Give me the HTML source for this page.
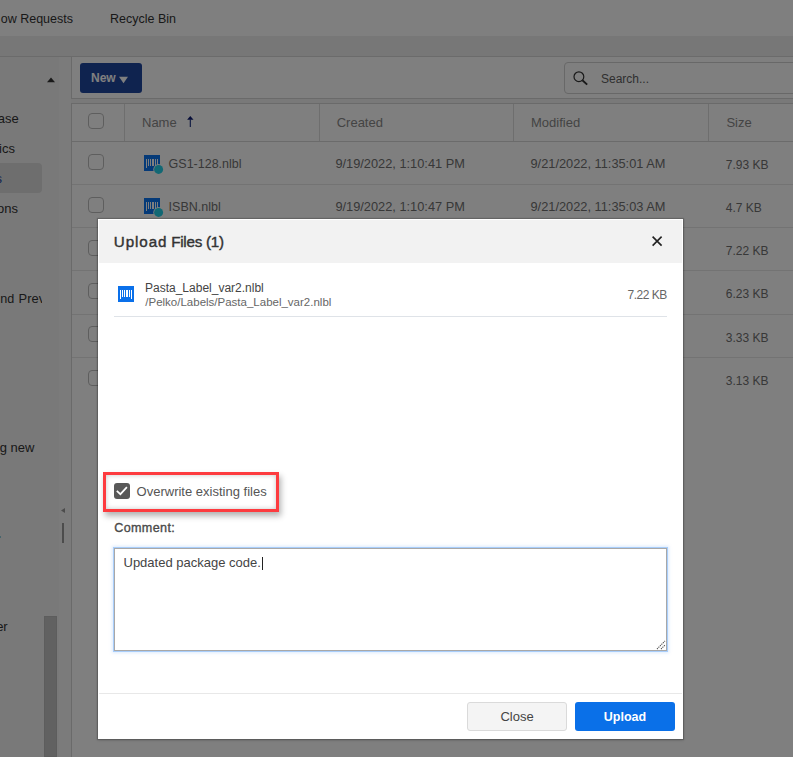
<!DOCTYPE html>
<html><head><meta charset="utf-8">
<style>
*{box-sizing:border-box;margin:0;padding:0}
html,body{width:793px;height:757px;overflow:hidden;background:#fff;font-family:"Liberation Sans",sans-serif;color:#333;position:relative}
.a{position:absolute}
.t{position:absolute;white-space:nowrap;line-height:1}
svg{display:block}
</style></head><body>
<div class="a" style="left:0px;top:0px;width:793px;height:36px;background:#fff;"></div>
<div class="t" style="top:12.62px;font-size:12.5px;color:#333;right:720px;">ow Requests</div>
<div class="t" style="top:12.62px;font-size:12.5px;color:#333;left:110px;">Recycle Bin</div>
<div class="a" style="left:0px;top:36px;width:793px;height:20px;background:#eeeeee;"></div>
<div class="a" style="left:0px;top:56px;width:793px;height:1px;background:#d6d6d6;"></div>
<div class="a" style="left:0px;top:57px;width:793px;height:700px;background:#f3f3f3;"></div>
<div class="a" style="left:59px;top:57px;width:12px;height:700px;background:#f6f6f6;"></div>
<div class="a" style="left:71px;top:57px;width:722px;height:42px;background:#fff;border-left:1px solid #d4d4d4;border-bottom:1px solid #d4d4d4"></div>
<div class="a" style="left:80px;top:63px;width:62px;height:30px;background:#1f479f;border-radius:3px"></div>
<div class="t" style="top:71.94px;font-size:12px;color:#fff;font-weight:bold;left:91px;">New</div>
<svg class="a" style="left:119px;top:75.5px" width="9" height="8" viewBox="0 0 9 8"><path d="M0 0.8H9L4.5 7.2Z" fill="#fff"/></svg>
<div class="a" style="left:564px;top:62px;width:240px;height:32px;background:#fff;border:1px solid #d0d0d0;border-radius:4px"></div>
<svg class="a" style="left:572px;top:69px" width="18" height="18" viewBox="0 0 18 18"><circle cx="6.9" cy="7.7" r="4.9" fill="none" stroke="#333" stroke-width="1.2"/><path d="M10.4 11.3L15.2 15.6" stroke="#333" stroke-width="1.9"/></svg>
<div class="t" style="top:73.24px;font-size:12px;color:#606060;left:601px;">Search...</div>
<svg class="a" style="left:46.5px;top:77px" width="8" height="6" viewBox="0 0 8 6"><path d="M0 5.2H8L4 0.6Z" fill="#333"/></svg>
<div class="t" style="top:111.90px;font-size:13px;color:#333;right:774.3px;">ase</div>
<div class="t" style="top:141.90px;font-size:13px;color:#333;right:778px;">ics</div>
<div class="a" style="left:-4px;top:163px;width:46px;height:30px;background:#dcdcdc;border-radius:4px"></div>
<div class="t" style="top:171.50px;font-size:13px;color:#1f479f;right:791px;">s</div>
<div class="t" style="top:201.50px;font-size:13px;color:#333;right:775px;">ons</div>
<div class="t" style="top:293.03px;font-size:12.6px;color:#333;left:0.2px;">nd</div>
<div class="a" style="left:0;top:280px;width:42px;height:40px;overflow:hidden"><div class="t" style="top:12.78px;font-size:12.9px;color:#333;left:18.6px;">Prev</div>
</div>
<div class="t" style="top:440.80px;font-size:13px;color:#333;right:758.6px;">g new</div>
<div class="t" style="top:619.80px;font-size:13px;color:#333;right:785.3px;">er</div>
<div class="a" style="left:0px;top:536px;width:1px;height:2px;background:rgba(42,164,189,.5);"></div>
<svg class="a" style="left:60px;top:508px" width="6" height="6" viewBox="0 0 6 6"><path d="M5 0V5L1 2.5Z" fill="#999"/></svg>
<div class="a" style="left:62px;top:523px;width:2px;height:20px;background:#999;"></div>
<div class="a" style="left:44px;top:616px;width:13px;height:141px;background:#c2c2c2;border:1px solid #bababa"></div>
<div class="a" style="left:71px;top:103px;width:730px;height:660px;background:#fff;border:1px solid #d4d4d4"></div>
<div class="a" style="left:72px;top:141px;width:730px;height:1px;background:#d6d6d6;"></div>
<div class="a" style="left:72px;top:184px;width:730px;height:1px;background:#e6e6e6;"></div>
<div class="a" style="left:72px;top:227px;width:730px;height:1px;background:#e6e6e6;"></div>
<div class="a" style="left:72px;top:270px;width:730px;height:1px;background:#e6e6e6;"></div>
<div class="a" style="left:72px;top:314px;width:730px;height:1px;background:#e6e6e6;"></div>
<div class="a" style="left:72px;top:357px;width:730px;height:1px;background:#e6e6e6;"></div>
<div class="a" style="left:124px;top:104px;width:1px;height:37px;background:#dcdcdc;"></div>
<div class="a" style="left:319px;top:104px;width:1px;height:37px;background:#dcdcdc;"></div>
<div class="a" style="left:513px;top:104px;width:1px;height:37px;background:#dcdcdc;"></div>
<div class="a" style="left:708px;top:104px;width:1px;height:37px;background:#dcdcdc;"></div>
<div class="a" style="left:88px;top:113px;width:16px;height:16px;background:#fff;border:1px solid #bdbdbd;border-radius:4px"></div>
<div class="t" style="top:116.30px;font-size:13px;color:#888;left:142px;">Name</div>
<svg class="a" style="left:186px;top:115px" width="8" height="13" viewBox="0 0 8 13"><path d="M4.3 4.5V12" stroke="#142a80" stroke-width="1.1"/><path d="M1.1 4.8L4.3 1L7.5 4.8Z" fill="#0c1a70"/></svg>
<div class="t" style="top:116.30px;font-size:13px;color:#888;left:336.7px;">Created</div>
<div class="t" style="top:116.30px;font-size:13px;color:#888;left:531px;">Modified</div>
<div class="t" style="top:116.30px;font-size:13px;color:#888;left:726.4px;">Size</div>
<div class="a" style="left:88px;top:154px;width:16px;height:16px;background:#fff;border:1px solid #bdbdbd;border-radius:4px"></div>
<svg class="a" style="left:144px;top:155px" width="22" height="22" viewBox="0 0 22 22"><rect x="0" y="0" width="16" height="16" fill="#0a74f0"/><path d="M2.5 4V13M4.5 4V11M6.5 4V11M9 4V11M11.5 4V11M13.5 4V13" stroke="#fff" stroke-width="1" fill="none"/><path d="M8 4H10V11H8Z" fill="#fff"/><circle cx="14.6" cy="14.4" r="5.3" fill="#fff"/><circle cx="14.6" cy="14.4" r="4.5" fill="#24d0e8"/></svg>
<div class="t" style="top:158.22px;font-size:12.5px;color:#707070;left:168.6px;">GS1-128.nlbl</div>
<div class="t" style="top:157.96px;font-size:12.8px;color:#707070;left:335.4px;">9/19/2022, 1:10:41 PM</div>
<div class="t" style="top:157.96px;font-size:12.8px;color:#707070;left:530.5px;">9/21/2022, 11:35:01 AM</div>
<div class="t" style="top:158.64px;font-size:12px;color:#707070;left:725.8px;">7.93 KB</div>
<div class="a" style="left:88px;top:197px;width:16px;height:16px;background:#fff;border:1px solid #bdbdbd;border-radius:4px"></div>
<svg class="a" style="left:144px;top:198px" width="22" height="22" viewBox="0 0 22 22"><rect x="0" y="0" width="16" height="16" fill="#0a74f0"/><path d="M2.5 4V13M4.5 4V11M6.5 4V11M9 4V11M11.5 4V11M13.5 4V13" stroke="#fff" stroke-width="1" fill="none"/><path d="M8 4H10V11H8Z" fill="#fff"/><circle cx="14.6" cy="14.4" r="5.3" fill="#fff"/><circle cx="14.6" cy="14.4" r="4.5" fill="#24d0e8"/></svg>
<div class="t" style="top:201.32px;font-size:12.5px;color:#707070;left:168.6px;">ISBN.nlbl</div>
<div class="t" style="top:201.06px;font-size:12.8px;color:#707070;left:335.4px;">9/19/2022, 1:10:47 PM</div>
<div class="t" style="top:201.06px;font-size:12.8px;color:#707070;left:530.5px;">9/21/2022, 11:35:03 AM</div>
<div class="t" style="top:201.74px;font-size:12px;color:#707070;left:725.8px;">4.7 KB</div>
<div class="a" style="left:88px;top:240px;width:16px;height:16px;background:#fff;border:1px solid #bdbdbd;border-radius:4px"></div>
<div class="t" style="top:244.94px;font-size:12px;color:#707070;left:725.8px;">7.22 KB</div>
<div class="a" style="left:88px;top:283px;width:16px;height:16px;background:#fff;border:1px solid #bdbdbd;border-radius:4px"></div>
<div class="t" style="top:288.24px;font-size:12px;color:#707070;left:725.8px;">6.23 KB</div>
<div class="a" style="left:88px;top:326px;width:16px;height:16px;background:#fff;border:1px solid #bdbdbd;border-radius:4px"></div>
<div class="t" style="top:331.54px;font-size:12px;color:#707070;left:725.8px;">3.33 KB</div>
<div class="a" style="left:88px;top:370px;width:16px;height:16px;background:#fff;border:1px solid #bdbdbd;border-radius:4px"></div>
<div class="t" style="top:374.74px;font-size:12px;color:#707070;left:725.8px;">3.13 KB</div>
<div class="a" style="left:0px;top:0px;width:793px;height:757px;background:rgba(0,0,0,.5);"></div>
<div class="a" style="left:98px;top:219px;width:585px;height:520px;background:#fff;box-shadow:0 0 1px 1px rgba(0,0,0,.18),0 1px 3px rgba(0,0,0,.2)"></div>
<div class="a" style="left:99px;top:220px;width:583px;height:43px;background:#f2f2f2;"></div>
<div class="t" style="top:233.83px;font-size:15.2px;color:#333;letter-spacing:0.9px;left:113.8px;-webkit-text-stroke:0.4px #333;">Upload</div>
<div class="t" style="top:233.83px;font-size:15.2px;color:#333;letter-spacing:-0.25px;left:171.2px;-webkit-text-stroke:0.4px #333;">Files (1)</div>
<svg class="a" style="left:651px;top:235px" width="12" height="12" viewBox="0 0 12 12"><path d="M1.6 1.6L10.6 10.6M10.6 1.6L1.6 10.6" stroke="#222" stroke-width="1.6"/></svg>
<svg class="a" style="left:118px;top:286px" width="22" height="22" viewBox="0 0 22 22"><rect x="0" y="0" width="16" height="16" fill="#0a70ea"/><path d="M2.5 4V13M4.5 4V11M6.5 4V11M9 4V11M11.5 4V11M13.5 4V13" stroke="#fff" stroke-width="1" fill="none"/><path d="M8 4H10V11H8Z" fill="#fff"/></svg>
<div class="t" style="top:281.54px;font-size:12px;color:#444;left:145.0px;">Pasta_Label_var2.nlbl</div>
<div class="t" style="top:297.07px;font-size:11.5px;color:#666;left:145.3px;">/Pelko/Labels/Pasta_Label_var2.nlbl</div>
<div class="t" style="top:288.84px;font-size:12px;color:#666;letter-spacing:-0.5px;left:627.6px;">7.22 KB</div>
<div class="a" style="left:114px;top:316px;width:553px;height:1px;background:#dfe3e8;"></div>
<div class="a" style="left:103px;top:472px;width:176px;height:40px;background:transparent;border:3px solid #fd3b3f;box-shadow:2px 4px 6px rgba(0,0,0,.3),inset 0 0 5px rgba(0,0,0,.22)"></div>
<div class="a" style="left:114px;top:483px;width:16px;height:16px;background:#595959;border-radius:3px"></div>
<svg class="a" style="left:114px;top:483px" width="16" height="16" viewBox="0 0 16 16"><path d="M2.8 7.8L6.4 11.2L12.9 4.2" fill="none" stroke="#fff" stroke-width="1.7"/></svg>
<div class="t" style="top:484.90px;font-size:13px;color:#555;left:136.6px;">Overwrite existing files</div>
<div class="t" style="top:521.53px;font-size:12.6px;color:#4a4a4a;letter-spacing:0.35px;left:114.2px;-webkit-text-stroke:0.35px #4a4a4a;">Comment:</div>
<div class="a" style="left:114px;top:548px;width:553px;height:103px;background:#fff;border:1px solid #a8a8a8;box-shadow:0 0 0 1px #a9cefb,0 0 3px 2px rgba(170,205,250,.4)"></div>
<div class="t" style="top:556.20px;font-size:13px;color:#444;left:123.5px;">Updated package code.</div>
<div class="a" style="left:262px;top:557px;width:1px;height:13px;background:#222;"></div>
<svg class="a" style="left:656px;top:640px" width="10" height="10" viewBox="0 0 10 10"><path d="M1 9L9 1M5 9L9 5" stroke="#555" stroke-width="1.1" stroke-dasharray="1.2 0.9"/></svg>
<div class="a" style="left:99px;top:693px;width:583px;height:1px;background:#e8e8e8;"></div>
<div class="a" style="left:467px;top:702px;width:100px;height:29px;background:#f4f4f4;border:1px solid #dadada;border-radius:3px"></div>
<div class="t" style="top:710.30px;font-size:13px;color:#444;left:367px;width:300px;text-align:center;">Close</div>
<div class="a" style="left:575px;top:702px;width:100px;height:29px;background:#0a70e8;border-radius:3px"></div>
<div class="t" style="top:710.72px;font-size:12.5px;color:#fff;font-weight:bold;left:475px;width:300px;text-align:center;">Upload</div>
</body></html>
